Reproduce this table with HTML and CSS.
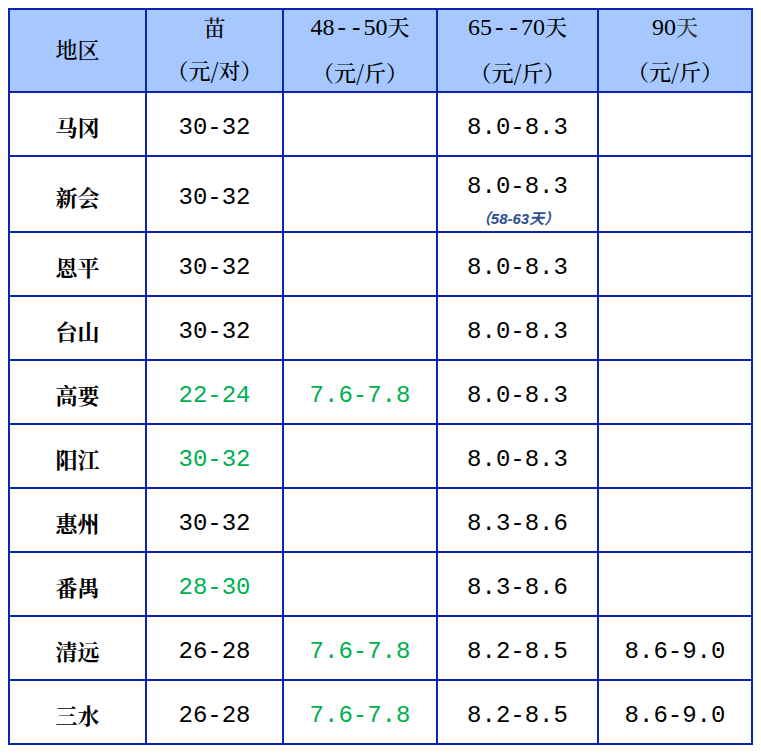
FILE: index.html
```html
<!DOCTYPE html>
<html lang="zh">
<head>
<meta charset="utf-8">
<title>价格表</title>
<link rel="stylesheet" href="styles.css">
</head>
<body>
<div class="grid">
  <div class="cell head"><span class="cn">地区</span></div>
  <div class="cell head"><span class="cn">苗</span><span class="cn">（元/对）</span></div>
  <div class="cell head"><span class="hn">48<span class="dash">--</span>50<span class="cn">天</span></span><span class="cn">（元/斤）</span></div>
  <div class="cell head"><span class="hn">65<span class="dash">--</span>70<span class="cn">天</span></span><span class="cn">（元/斤）</span></div>
  <div class="cell head"><span class="hn">90<span class="cn light">天</span></span><span class="cn">（元/斤）</span></div>

  <div class="cell name">马冈</div><div class="cell num">30-32</div><div class="cell num"></div><div class="cell num">8.0-8.3</div><div class="cell num"></div>

  <div class="cell name">新会</div><div class="cell num">30-32</div><div class="cell num"></div><div class="cell num top"><span>8.0-8.3</span><span class="note">（58-63天）</span></div><div class="cell num"></div>

  <div class="cell name">恩平</div><div class="cell num">30-32</div><div class="cell num"></div><div class="cell num">8.0-8.3</div><div class="cell num"></div>

  <div class="cell name">台山</div><div class="cell num">30-32</div><div class="cell num"></div><div class="cell num">8.0-8.3</div><div class="cell num"></div>

  <div class="cell name">高要</div><div class="cell num green">22-24</div><div class="cell num green">7.6-7.8</div><div class="cell num">8.0-8.3</div><div class="cell num"></div>

  <div class="cell name">阳江</div><div class="cell num green">30-32</div><div class="cell num"></div><div class="cell num">8.0-8.3</div><div class="cell num"></div>

  <div class="cell name">惠州</div><div class="cell num">30-32</div><div class="cell num"></div><div class="cell num">8.3-8.6</div><div class="cell num"></div>

  <div class="cell name">番禺</div><div class="cell num green">28-30</div><div class="cell num"></div><div class="cell num">8.3-8.6</div><div class="cell num"></div>

  <div class="cell name">清远</div><div class="cell num">26-28</div><div class="cell num green">7.6-7.8</div><div class="cell num">8.2-8.5</div><div class="cell num">8.6-9.0</div>

  <div class="cell name">三水</div><div class="cell num">26-28</div><div class="cell num green">7.6-7.8</div><div class="cell num">8.2-8.5</div><div class="cell num">8.6-9.0</div>
</div>
</body>
</html>
```

FILE: styles.css
```css
html, body {
  margin: 0;
  padding: 0;
  background: #ffffff;
}

body {
  padding: 8px;
  font-family: "Noto Serif CJK SC", "Noto Sans CJK SC", serif;
  color: #000000;
}

.grid {
  width: 745px;
  height: 737px;
  box-sizing: border-box;
  padding: 2px;
  background: #0b24a8;
  display: grid;
  grid-template-columns: 135px 135px 152px 159px 152px;
  grid-template-rows: 81px 62px 74px repeat(8, 62px);
  gap: 2px;
}

.cell {
  background: #ffffff;
  display: flex;
  flex-direction: column;
  align-items: center;
  justify-content: center;
  text-align: center;
  box-sizing: border-box;
}

.head {
  background: #a6c8fe;
  font-size: 22px;
  line-height: 43px;
  padding-bottom: 5px;
}

.cn {
  font-family: "Noto Serif CJK SC", "Noto Sans CJK SC", serif;
  font-size: 22px;
  font-weight: 500;
}

.hn {
  font-family: "Liberation Serif", serif;
  font-size: 24px;
}

.dash {
  font-family: "Liberation Mono", monospace;
  font-size: 24px;
}

.light {
  color: #333333;
}

.name {
  font-family: "Noto Serif CJK SC", "Noto Sans CJK SC", serif;
  font-size: 22px;
  font-weight: 700;
  padding-top: 4px;
}

.num {
  font-family: "Liberation Mono", monospace;
  font-size: 24px;
  line-height: 30px;
  padding-top: 8px;
}

.green {
  color: #00b050;
}

.num.top {
  justify-content: flex-start;
  padding-top: 15px;
}

.note {
  margin-top: 8px;
  font-family: "Liberation Sans", "Noto Sans CJK SC", sans-serif;
  font-size: 15px;
  line-height: 18px;
  font-style: italic;
  font-weight: 700;
  color: #2f4f94;
}
```
